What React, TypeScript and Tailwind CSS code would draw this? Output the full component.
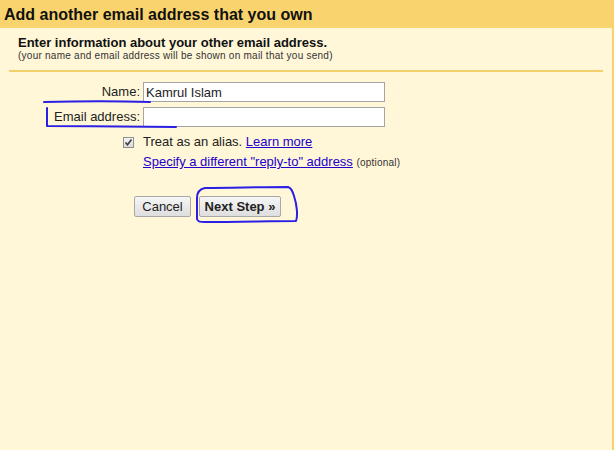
import React from "react";

export default function App() {
  return (
    <div
      className="relative w-[614px] h-[450px] bg-[#fff7d8] border-r-2 border-[#f8d36c] text-black"
      style={{ fontFamily: '"Liberation Sans", Arial, sans-serif' }}
    >
      {/* Header */}
      <div className="h-[28px] bg-[#f9d46e] pl-[4px] pt-[3px] text-[16px] leading-[24px] font-bold text-[#111]">
        Add another email address that you own
      </div>

      {/* Intro */}
      <div className="mx-[9px] border-b-2 border-[#f4d06a] pl-[9px] pt-[8px] pb-[9px]">
        <div className="text-[13px] leading-[14px] font-bold text-[#111]">
          Enter information about your other email address.
        </div>
        <div className="text-[10px] leading-[11px] tracking-[0.25px] text-[#333]">
          (your name and email address will be shown on mail that you send)
        </div>
      </div>

      {/* Form */}
      <div className="grid grid-cols-[140px_auto] gap-x-[3px] gap-y-[5px] mt-[10px] text-[13px]">
        <label className="text-right leading-[20px] text-[#222]">Name:</label>
        <input
          defaultValue="Kamrul Islam"
          className="w-[242px] h-[20px] bg-white border border-[#a5a5a5] px-[2px] text-[13px] text-[#222] outline-none"
        />
        <label className="text-right leading-[20px] text-[#222]">Email address:</label>
        <input className="w-[242px] h-[20px] bg-white border border-[#a5a5a5] px-[2px] text-[13px] outline-none" />
      </div>

      <div className="grid grid-cols-[140px_auto] gap-x-[3px] mt-[5px] text-[13px] leading-[20px]">
        <div className="flex justify-end items-center pr-[6px]">
          <span className="flex items-center justify-center w-[11px] h-[11px] border border-[#8e8f8f] bg-gradient-to-b from-[#f4f4f4] to-[#dcdcdc]">
            <svg width="9" height="9" viewBox="0 0 9 9">
              <path d="M1.5 4.5 L3.5 6.8 L7.5 1.5" fill="none" stroke="#3c3c3c" strokeWidth="1.6" />
            </svg>
          </span>
        </div>
        <div className="text-[#222]">
          Treat as an alias.{" "}
          <a className="text-[#2200cc] underline cursor-pointer">Learn more</a>
        </div>
        <div />
        <div>
          <a className="text-[#2200cc] underline cursor-pointer">
            Specify a different "reply-to" address
          </a>{" "}
          <span className="text-[10px] tracking-[0.2px] text-[#333]">(optional)</span>
        </div>
      </div>

      {/* Buttons */}
      <div className="flex gap-[8px] pl-[134px] mt-[23px]">
        <button className="w-[57px] h-[21px] border border-[#a8a8a8] rounded-[2px] bg-gradient-to-b from-[#f6f6f6] to-[#dedede] text-[13px] text-[#222]">
          Cancel
        </button>
        <button className="w-[82px] h-[21px] border border-[#a8a8a8] rounded-[2px] bg-gradient-to-b from-[#f6f6f6] to-[#dedede] text-[13px] font-bold text-[#222]">
          Next Step »
        </button>
      </div>

      {/* Hand-drawn annotations */}
      <svg className="absolute left-0 top-0 pointer-events-none" width="614" height="450">
        <g fill="none" stroke="#2b1fe6" strokeWidth="2" strokeLinecap="round" strokeLinejoin="round">
          <path d="M44 102 C80 101 120 101 150 102" />
          <path d="M47 108 L47 126 C90 126 140 127 176 127" />
          <path d="M205 188 C200 189 197 192 197 198 L197 219 C198 222 200 222 205 222 C240 222 270 221 296 221 C298 216 297 205 294 196 C292 190 291 188 288 187 C260 187 230 188 205 188" />
        </g>
      </svg>
    </div>
  );
}
